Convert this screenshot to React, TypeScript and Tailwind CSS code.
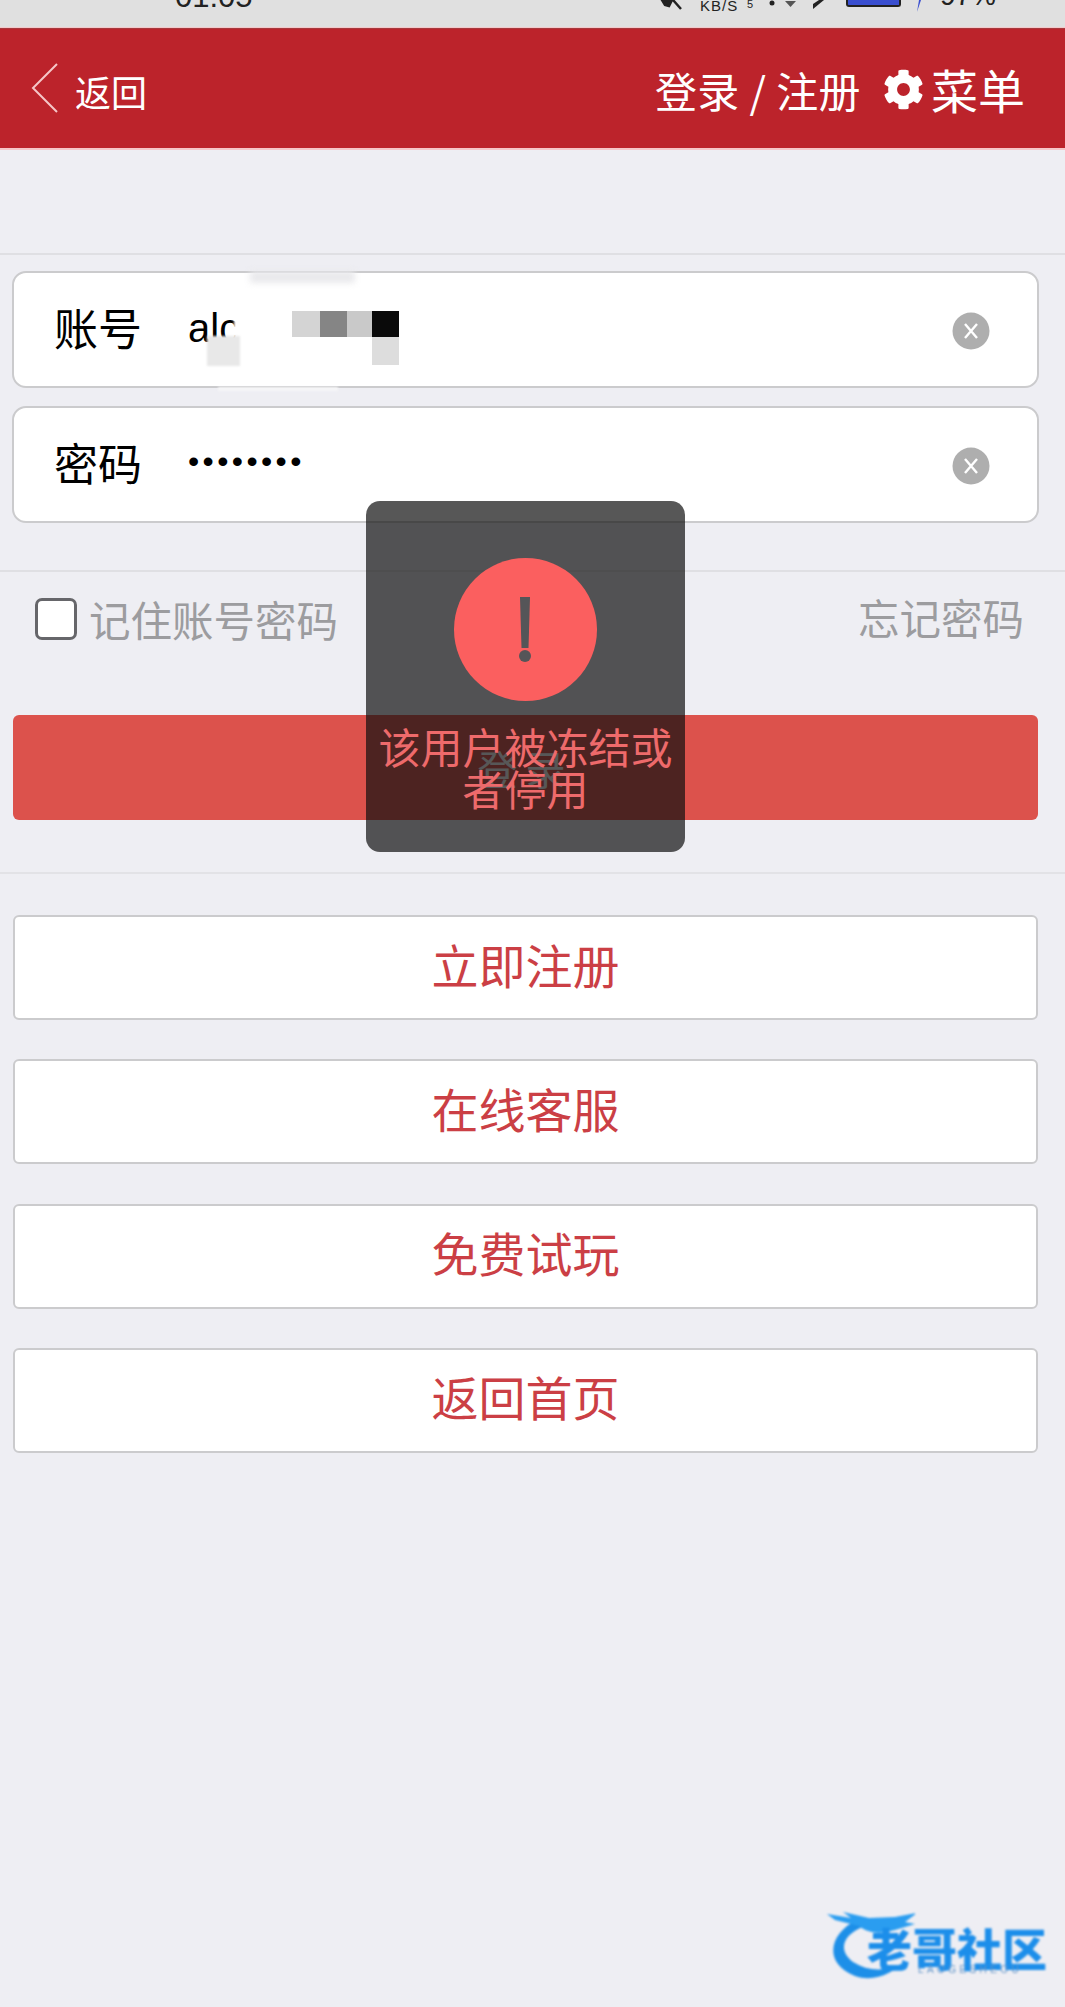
import { FaCog } from 'react-icons/fa'

const cjk = "font-['Noto_Sans_CJK_SC','Liberation_Sans',sans-serif]"
const actions = ['立即注册', '在线客服', '免费试玩', '返回首页']

function ClearIcon() {
  return (
    <svg width="38" height="38" viewBox="0 0 38 38" className="shrink-0 mt-[2px]">
      <circle cx="19" cy="19" r="18.5" fill="#aeaeae" />
      <path d="M13 12 L25 26 M25 12 L13 26" stroke="#fff" strokeWidth="2.4" />
    </svg>
  )
}

function StatusBar() {
  return (
    <div className="h-[28px] bg-[#e0e0e0] border-b border-[#f4c9cb] overflow-hidden flex items-start justify-between pl-[175px] pr-[69px] text-[#222] font-['Liberation_Sans',sans-serif]">
      <span className="text-[31px] leading-[36px] mt-[-21px]">01:05</span>
      <div className="flex items-start">
        <svg width="22" height="12" viewBox="0 0 22 12">
          <path d="M2 0 L12 0 L9 6 L5 5 Z M13 0 L21 9" fill="#222" stroke="#222" strokeWidth="2.5" />
        </svg>
        <span className="ml-[18px] w-[38px] text-[15px] leading-[12px] tracking-[1px]">KB/S</span>
        <span className="ml-[9px] w-[6px] text-[11px] leading-[9px]">5</span>
        <svg width="32" height="12" viewBox="0 0 32 12" className="ml-[12px]">
          <circle cx="7" cy="3" r="2.5" fill="#222" />
          <path d="M20 1 L31 1 L25.5 7 Z" fill="#555" />
        </svg>
        <svg width="18" height="12" viewBox="0 0 18 12" className="ml-[13px]">
          <path d="M3 9 L14 0 L9 0 L3 4 Z" fill="#222" />
        </svg>
        <div className="ml-[18px] w-[55px] h-[7px] bg-[#3a4fd0] border-2 border-t-0 border-[#222] rounded-b-[3px]" />
        <svg width="8" height="14" viewBox="0 0 8 14" className="ml-[14px]">
          <path d="M6 0 L4 0 L2 12 Z" fill="#3a4fd0" />
        </svg>
        <span className="ml-[17px] text-[28px] leading-[30px] mt-[-19px]">97%</span>
      </div>
    </div>
  )
}

function Header() {
  return (
    <div className="h-[122px] bg-[#bc232b] border-t border-[#a63a3e] border-b-2 border-b-[#f6c6c8] flex items-center justify-between pl-[31px] pr-[40px] text-white">
      <div className="flex items-center gap-[17px]">
        <svg width="27" height="50" viewBox="0 0 27 50" className="mt-[-2px]">
          <path d="M26 1 L2 25 L26 49" fill="none" stroke="#f6c6c8" strokeWidth="2" />
        </svg>
        <span className="text-[36px] leading-[44px] mt-[4px]">返回</span>
      </div>
      <div className="flex items-center mt-[2px]">
        <span className="text-[42px] leading-[50px] tracking-[0.4px]">登录 / 注册</span>
        <FaCog className="w-[41px] h-[41px] ml-[22px] mr-[7px]" />
        <span className="text-[47px] leading-[54px] mt-[-2px]">菜单</span>
      </div>
    </div>
  )
}

function Field({ label, children }: { label: string; children: React.ReactNode }) {
  return (
    <div className="relative h-[117px] bg-white border-2 border-[#cbcbcd] rounded-[14px] flex items-center pl-[40px] pr-[47px]">
      <span className="text-[44px] leading-[50px] w-[134px] text-black mt-[-6px]">{label}</span>
      <div className="flex-1 mt-[-3px]">{children}</div>
      <ClearIcon />
    </div>
  )
}

function Logo() {
  return (
    <div className="absolute left-[825px] top-[1910px] w-[230px] h-[85px] blur-[0.8px]">
      <svg width="90" height="80" viewBox="0 0 90 80" className="absolute left-0 top-0">
        <path d="M32 10 C6 22 -4 52 30 66 C50 73 68 62 80 52 C62 62 44 62 28 52 C12 40 18 24 40 16 Z" fill="#1d8fe8" />
        <path d="M2 4 L26 8 L18 2 L44 8 L70 7 L92 3 L80 12 L90 14 L70 20 C56 24 44 24 34 16 L10 10 Z" fill="#2a9df0" />
      </svg>
      <span className={`absolute left-[42px] top-[22px] text-[45px] leading-[32px] font-black whitespace-nowrap text-[#1c8eea] ${cjk}`}>
        老哥社区
      </span>
      <span className="absolute left-[93px] top-[55px] text-[10px] leading-[10px] tracking-[3.4px] text-[#5f93c8] whitespace-nowrap font-['Liberation_Sans',sans-serif]">
        LAOGESHEOU
      </span>
    </div>
  )
}

export default function App() {
  return (
    <div className={`relative min-h-[2007px] bg-[#eeeef3] overflow-hidden ${cjk}`}>
      <StatusBar />
      <Header />

      <div className="h-[105px] border-b-2 border-[#dfdfe3]" />

      <div className="relative pl-[12px] pr-[26px] pt-[16px] pb-[47px] flex flex-col gap-[18px] border-b-2 border-[#dfdfe3]">
        <Field label="账号">
          <span className="text-[40px] leading-[48px] text-black font-['Liberation_Sans',sans-serif]">alc</span>
        </Field>
        <Field label="密码">
          <span className="block -translate-y-[2px] text-[32px] leading-[48px] tracking-[3.4px] text-black font-['Liberation_Sans',sans-serif]">••••••••</span>
        </Field>
        {/* 打码 */}
        <div className="absolute left-[234px] top-[32px] w-[58px] h-[92px] bg-white blur-[1px]" />
        <div className="absolute left-[207px] top-[81px] w-[33px] h-[30px] bg-[#e8e8e8] blur-[1px]" />
        <div className="absolute left-[292px] top-[56px] w-[28px] h-[26px] bg-[#d4d4d4]" />
        <div className="absolute left-[320px] top-[56px] w-[27px] h-[26px] bg-[#858585]" />
        <div className="absolute left-[347px] top-[56px] w-[25px] h-[26px] bg-[#c9c9c9]" />
        <div className="absolute left-[372px] top-[56px] w-[27px] h-[26px] bg-[#0a0a0a]" />
        <div className="absolute left-[372px] top-[82px] w-[27px] h-[28px] bg-[#dddddd]" />
        <div className="absolute left-[250px] top-[16px] w-[105px] h-[12px] bg-[#e9e9ec] blur-[3px]" />
        <div className="absolute left-[218px] top-[132px] w-[120px] h-[4px] bg-[#f6f6f8] blur-[1px]" />
      </div>

      <div className="h-[143px] pl-[35px] pr-[41px] pb-[50px] flex items-center justify-between text-[41.5px] leading-[50px] text-[#9c9c9f]">
        <div className="flex items-center gap-[12px]">
          <div className="w-[42px] h-[42px] bg-white border-[3px] border-[#66666a] rounded-[7px]" />
          <span>记住账号密码</span>
        </div>
        <span className="mt-[-4px]">忘记密码</span>
      </div>

      <div className="pl-[13px] pr-[27px] pb-[52px] border-b-2 border-[#e2e2e6]">
        <button className="w-full h-[105px] bg-[#dc524c] rounded-[6px] text-white text-[40px] tracking-[8px]">
          登录
        </button>
      </div>

      <div className="pl-[13px] pr-[27px] pt-[41px] flex flex-col gap-[39.3px]">
        {actions.map((a) => (
          <button
            key={a}
            className="h-[105px] pb-[8px] bg-white border-2 border-[#cbcbcd] rounded-[6px] text-[47px] leading-[54px] text-[#cb3f45]"
          >
            {a}
          </button>
        ))}
      </div>

      {/* 提示层 */}
      <div className="absolute left-[366px] top-[501px] w-[319px] h-[351px] rounded-[14px] bg-[#0f0f0f]/[0.7] flex flex-col items-center pt-[57px]">
        <svg width="143" height="143" viewBox="0 0 143 143" className="shrink-0">
          <circle cx="71.5" cy="71.5" r="71.5" fill="#fb5f5f" />
          <path d="M66 39 H76 L74.5 90 H67.5 Z" fill="#555558" />
          <circle cx="71" cy="98" r="6" fill="#555558" />
        </svg>
        <p className="mt-[24px] w-[300px] text-center text-[42px] leading-[42px] text-[#ee6a6b]">该用户被冻结或者停用</p>
      </div>

      <Logo />
    </div>
  )
}
